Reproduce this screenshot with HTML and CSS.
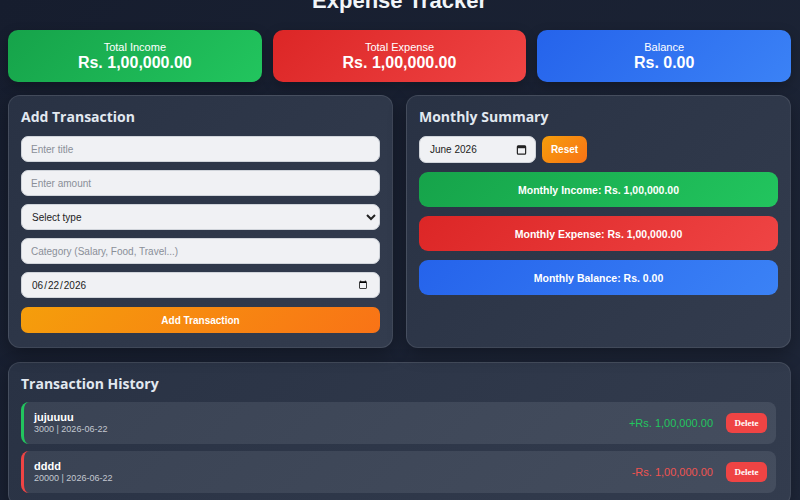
FILE: index.html
```html
<!DOCTYPE html>
<html lang="en">
<head>
  <meta charset="UTF-8">
  <meta name="viewport" content="width=device-width, initial-scale=1">
  <title>Expense Tracker</title>
  <link rel="stylesheet" href="styles.css">
</head>
<body>

  <h1>Expense Tracker</h1>

  <!-- Totais -->
  <div class="summary">
    <div class="card income">
      <span class="card-label">Total Income</span>
      <span class="card-value">Rs. 1,00,000.00</span>
    </div>
    <div class="card expense">
      <span class="card-label">Total Expense</span>
      <span class="card-value">Rs. 1,00,000.00</span>
    </div>
    <div class="card balance">
      <span class="card-label">Balance</span>
      <span class="card-value">Rs. 0.00</span>
    </div>
  </div>

  <div class="panels">
    <!-- Formulário -->
    <div class="panel">
      <h2>Add Transaction</h2>
      <form id="tx-form" class="tx-form">
        <input type="text" id="title" placeholder="Enter title">
        <input type="number" id="amount" placeholder="Enter amount">
        <select id="type">
          <option value="">Select type</option>
          <option value="income">Income</option>
          <option value="expense">Expense</option>
        </select>
        <input type="text" id="category" placeholder="Category (Salary, Food, Travel...)">
        <input type="date" id="date" value="2026-06-22">
        <button type="submit" class="btn-orange">Add Transaction</button>
      </form>
    </div>

    <!-- Resumo mensal -->
    <div class="panel">
      <h2>Monthly Summary</h2>
      <div class="month-row">
        <label class="month-picker" for="month">
          <span>June 2026</span>
          <svg width="11" height="11" viewBox="0 0 12 12">
            <rect x="1.5" y="2" width="9" height="9" rx="1" fill="none" stroke="#222" stroke-width="1.3"/>
            <rect x="1.5" y="2" width="9" height="2.6" fill="#222"/>
          </svg>
          <input type="hidden" id="month" value="2026-06">
        </label>
        <button type="button" class="btn-orange btn-reset">Reset</button>
      </div>
      <div class="month-bar income">Monthly Income: Rs. 1,00,000.00</div>
      <div class="month-bar expense">Monthly Expense: Rs. 1,00,000.00</div>
      <div class="month-bar balance">Monthly Balance: Rs. 0.00</div>
    </div>
  </div>

  <!-- Histórico -->
  <div class="panel history">
    <h2>Transaction History</h2>
    <ul class="tx-list">
      <li class="tx-item plus">
        <div class="tx-info">
          <strong>jujuuuu</strong>
          <small>3000 | 2026-06-22</small>
        </div>
        <span class="tx-amount">+Rs. 1,00,000.00</span>
        <button class="btn-delete">Delete</button>
      </li>
      <li class="tx-item minus">
        <div class="tx-info">
          <strong>dddd</strong>
          <small>20000 | 2026-06-22</small>
        </div>
        <span class="tx-amount">-Rs. 1,00,000.00</span>
        <button class="btn-delete">Delete</button>
      </li>
    </ul>
  </div>

</body>
</html>
```

FILE: styles.css
```css
* {
  box-sizing: border-box;
}

body {
  margin: 0;
  padding: 0 9px 0 8px;
  font-family: 'Liberation Sans', Arial, sans-serif;
  background: linear-gradient(135deg, #161d2e, #1e2638);
  color: #fff;
  min-height: 100vh;
}

h1 {
  text-align: center;
  font-size: 22px;
  line-height: 28px;
  margin: -13px 0 15px;
  color: #f1f5f9;
}

h2 {
  font-family: 'Open Sans', 'Liberation Sans', sans-serif;
  font-size: 14px;
  line-height: 18px;
  margin: 0 0 10px;
  color: #e2e8f0;
}

/* Cartões de totais */
.summary {
  display: grid;
  grid-template-columns: repeat(3, 1fr);
  gap: 11px;
  margin-bottom: 13px;
}

.card {
  height: 52px;
  border-radius: 10px;
  display: flex;
  flex-direction: column;
  align-items: center;
  justify-content: center;
  box-shadow: 0 4px 12px rgba(0, 0, 0, 0.25);
}

.card-label {
  font-size: 11px;
  line-height: 13px;
}

.card-value {
  font-size: 16px;
  font-weight: bold;
  line-height: 18px;
}

.income {
  background: linear-gradient(135deg, #16a34a, #22c55e);
}

.expense {
  background: linear-gradient(135deg, #dc2626, #ef4444);
}

.balance {
  background: linear-gradient(135deg, #2563eb, #3b82f6);
}

/* Painéis */
.panels {
  display: grid;
  grid-template-columns: 1fr 1fr;
  gap: 13px;
  margin-bottom: 14px;
}

.panel {
  background: linear-gradient(135deg, #293244, #333c4e);
  border: 1px solid rgba(255, 255, 255, 0.1);
  border-radius: 12px;
  padding: 12px 12px 14px;
  box-shadow: 0 6px 18px rgba(0, 0, 0, 0.3);
}

.tx-form {
  display: flex;
  flex-direction: column;
  gap: 8px;
}

input, select {
  width: 100%;
  height: 26px;
  padding: 0 9px;
  border: 1px solid #d0d4da;
  border-radius: 7px;
  background-color: #f0f1f4;
  font-family: 'Liberation Sans', Arial, sans-serif;
  font-size: 10px;
  color: #222;
  outline: none;
}

input::placeholder {
  color: #8a8f98;
}

select {
  padding: 0 6px;
}

.btn-orange {
  height: 26px;
  border: none;
  border-radius: 7px;
  background: linear-gradient(135deg, #f59e0b, #f97316);
  color: #fff;
  font-family: 'Liberation Sans', Arial, sans-serif;
  font-size: 10px;
  font-weight: bold;
  cursor: pointer;
}

.tx-form .btn-orange {
  margin-top: 1px;
}

.month-row {
  display: flex;
  gap: 6px;
  margin-bottom: 9px;
}

.month-picker {
  width: 117px;
  height: 27px;
  padding: 0 8px 0 10px;
  display: flex;
  align-items: center;
  justify-content: space-between;
  border: 1px solid #d0d4da;
  border-radius: 7px;
  background-color: #f0f1f4;
  font-size: 10px;
  color: #222;
  cursor: pointer;
}

.btn-reset {
  width: 45px;
  height: 27px;
}

.month-bar {
  height: 35px;
  border-radius: 9px;
  display: flex;
  align-items: center;
  justify-content: center;
  font-size: 10.5px;
  font-weight: bold;
  margin-bottom: 9px;
}

/* Histórico */
.history {
  padding: 12px 14px 12px 12px;
}

.history h2 {
  margin-bottom: 9px;
}

.tx-list {
  list-style: none;
  margin: 0;
  padding: 0;
  display: flex;
  flex-direction: column;
  gap: 7px;
}

.tx-item {
  display: flex;
  align-items: center;
  height: 42px;
  padding: 0 9px 0 10px;
  border-radius: 8px;
  background: linear-gradient(135deg, #3a4354, #444d5e);
  border-left: 3px solid;
}

.tx-item.plus {
  border-left-color: #22c55e;
}

.tx-item.minus {
  border-left-color: #ef4444;
}

.tx-info {
  flex: 1;
  display: flex;
  flex-direction: column;
}

.tx-info strong {
  font-size: 11px;
  line-height: 13px;
}

.tx-info small {
  font-size: 9px;
  line-height: 11px;
  color: #c3c8d0;
}

.tx-amount {
  font-size: 11px;
  margin-right: 13px;
}

.plus .tx-amount {
  color: #22c55e;
}

.minus .tx-amount {
  color: #ef5350;
}

.btn-delete {
  width: 41px;
  height: 20px;
  border: none;
  border-radius: 6px;
  background-color: #ef4444;
  color: #fff;
  font-family: 'Liberation Serif', serif;
  font-size: 9px;
  font-weight: bold;
  cursor: pointer;
}
```
